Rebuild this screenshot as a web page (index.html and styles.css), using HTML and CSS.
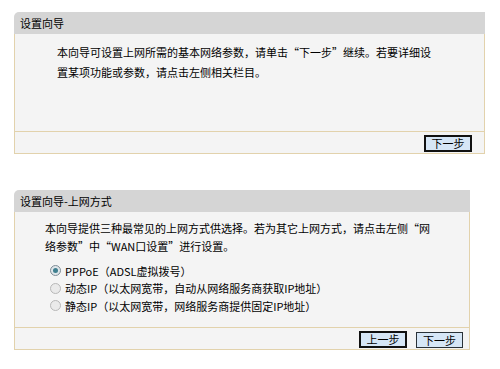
FILE: index.html
```html
<!DOCTYPE html>
<html>
	<head>
		<meta charset="UTF-8">
		<title>设置向导</title>
		<link rel="stylesheet" href="styles.css">
	</head>
	<body>
		<div class="page">
			<div class="panel panel-wide">
				<div class="panel-title">设置向导</div>
				<div class="panel-body intro">
					<p>本向导可设置上网所需的基本网络参数，请单击“下一步”继续。若要详细设<br>置某项功能或参数，请点击左侧相关栏目。</p>
				</div>
				<div class="panel-foot">
					<span class="btn btn-default">下一步</span>
				</div>
			</div>
			<div class="panel panel-narrow">
				<div class="panel-title">设置向导-上网方式</div>
				<div class="panel-body mode">
					<p>本向导提供三种最常见的上网方式供选择。若为其它上网方式，请点击左侧“网络参数”中“WAN口设置”进行设置。</p>
					<ul class="options">
						<li><span class="radio checked"></span>PPPoE（ADSL虚拟拨号）</li>
						<li><span class="radio"></span>动态IP（以太网宽带，自动从网络服务商获取IP地址）</li>
						<li><span class="radio"></span>静态IP（以太网宽带，网络服务商提供固定IP地址）</li>
					</ul>
				</div>
				<div class="panel-foot foot-tight">
					<span class="btn btn-default">上一步</span>
					<span class="btn">下一步</span>
				</div>
			</div>
		</div>
	</body>
</html>
```

FILE: styles.css
```css
*{
	margin:0;
	padding:0;
}
body{
	background:#fff;
	font-family:"Noto Sans CJK SC","Liberation Sans",sans-serif;
	font-size:11px;
	color:#000;
}
.page{
	padding:12px 0 0 14px;
}
.panel{
	display:flex;
	flex-direction:column;
}
.panel-wide{
	width:471px;
}
.panel-narrow{
	width:456px;
	margin-top:36px;
}
.panel-title{
	height:22px;
	line-height:22px;
	padding-left:6px;
	background:#d5d5d5;
	border-top-left-radius:5px;
}
.panel-body{
	background:#f4f4f4;
	border-left:1px solid #e2d2ac;
	border-right:1px solid #e2d2ac;
}
.intro{
	height:89px;
	padding:8px 20px 0 42px;
	line-height:20px;
}
.mode{
	height:108px;
	padding:7px 34px 0 30px;
	line-height:18px;
}
.options{
	list-style:none;
	margin-top:7px;
	padding-left:5px;
}
.options li{
	display:flex;
	align-items:center;
	height:17.5px;
}
.radio{
	width:9px;
	height:9px;
	border:1px solid #b8b8b8;
	border-radius:50%;
	background:#eaeaea;
	margin-right:4px;
	position:relative;
}
.radio.checked{
	border-color:#7f8c96;
	background:#dfe6ea;
}
.radio.checked::after{
	content:"";
	position:absolute;
	left:2px;
	top:2px;
	width:5px;
	height:5px;
	border-radius:50%;
	background:#3f7f8f;
}
.panel-foot{
	height:21px;
	background:#f4f4f4;
	border:1px solid #e2d2ac;
	display:flex;
	justify-content:flex-end;
	align-items:flex-start;
	padding-right:12px;
	gap:9px;
}
.foot-tight{
	padding-right:6px;
}
.btn{
	display:block;
	width:45px;
	height:14px;
	margin-top:4px;
	line-height:14px;
	text-align:center;
	background:#d6e6f6;
	border:1px solid #2a3238;
	font-size:11px;
}
.btn-default{
	width:44px;
	height:13px;
	margin-top:3px;
	line-height:13px;
	border:2px solid #111;
}
```
